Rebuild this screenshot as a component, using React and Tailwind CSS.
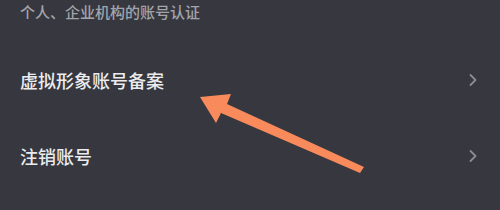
import React from "react";

function Chevron() {
  return (
    <svg width="10" height="14" viewBox="0 0 10 14" className="text-[#8b8c93]">
      <path d="M2.5 2 L7.5 7 L2.5 12" fill="none" stroke="currentColor" strokeWidth="1.8" strokeLinecap="round" strokeLinejoin="round" />
    </svg>
  );
}

function Row({ title }) {
  return (
    <div className="flex h-[76px] items-center justify-between pl-5 pr-[22px]">
      <span className="text-[18px] font-medium leading-none text-[#ececee]">{title}</span>
      <Chevron />
    </div>
  );
}

export default function App() {
  return (
    <div
      className="relative h-[210px] w-[500px] overflow-hidden bg-[#36373f]"
      style={{ fontFamily: '"Noto Sans CJK SC", "Noto Sans", sans-serif' }}
    >
      <div className="flex h-[22px] items-center pl-5 text-[15px] font-medium leading-none text-[#a3a4aa]">
        个人、企业机构的账号认证
      </div>
      <div className="mt-[20px] flex flex-col">
        <Row title="虚拟形象账号备案" />
        <Row title="注销账号" />
      </div>
      <svg className="pointer-events-none absolute left-0 top-0" width="500" height="210" viewBox="0 0 500 210">
        <polygon
          points="200,97 231,94 227,104 364,167 360,173 221,113 216,123"
          fill="#f88a5b"
        />
      </svg>
    </div>
  );
}
